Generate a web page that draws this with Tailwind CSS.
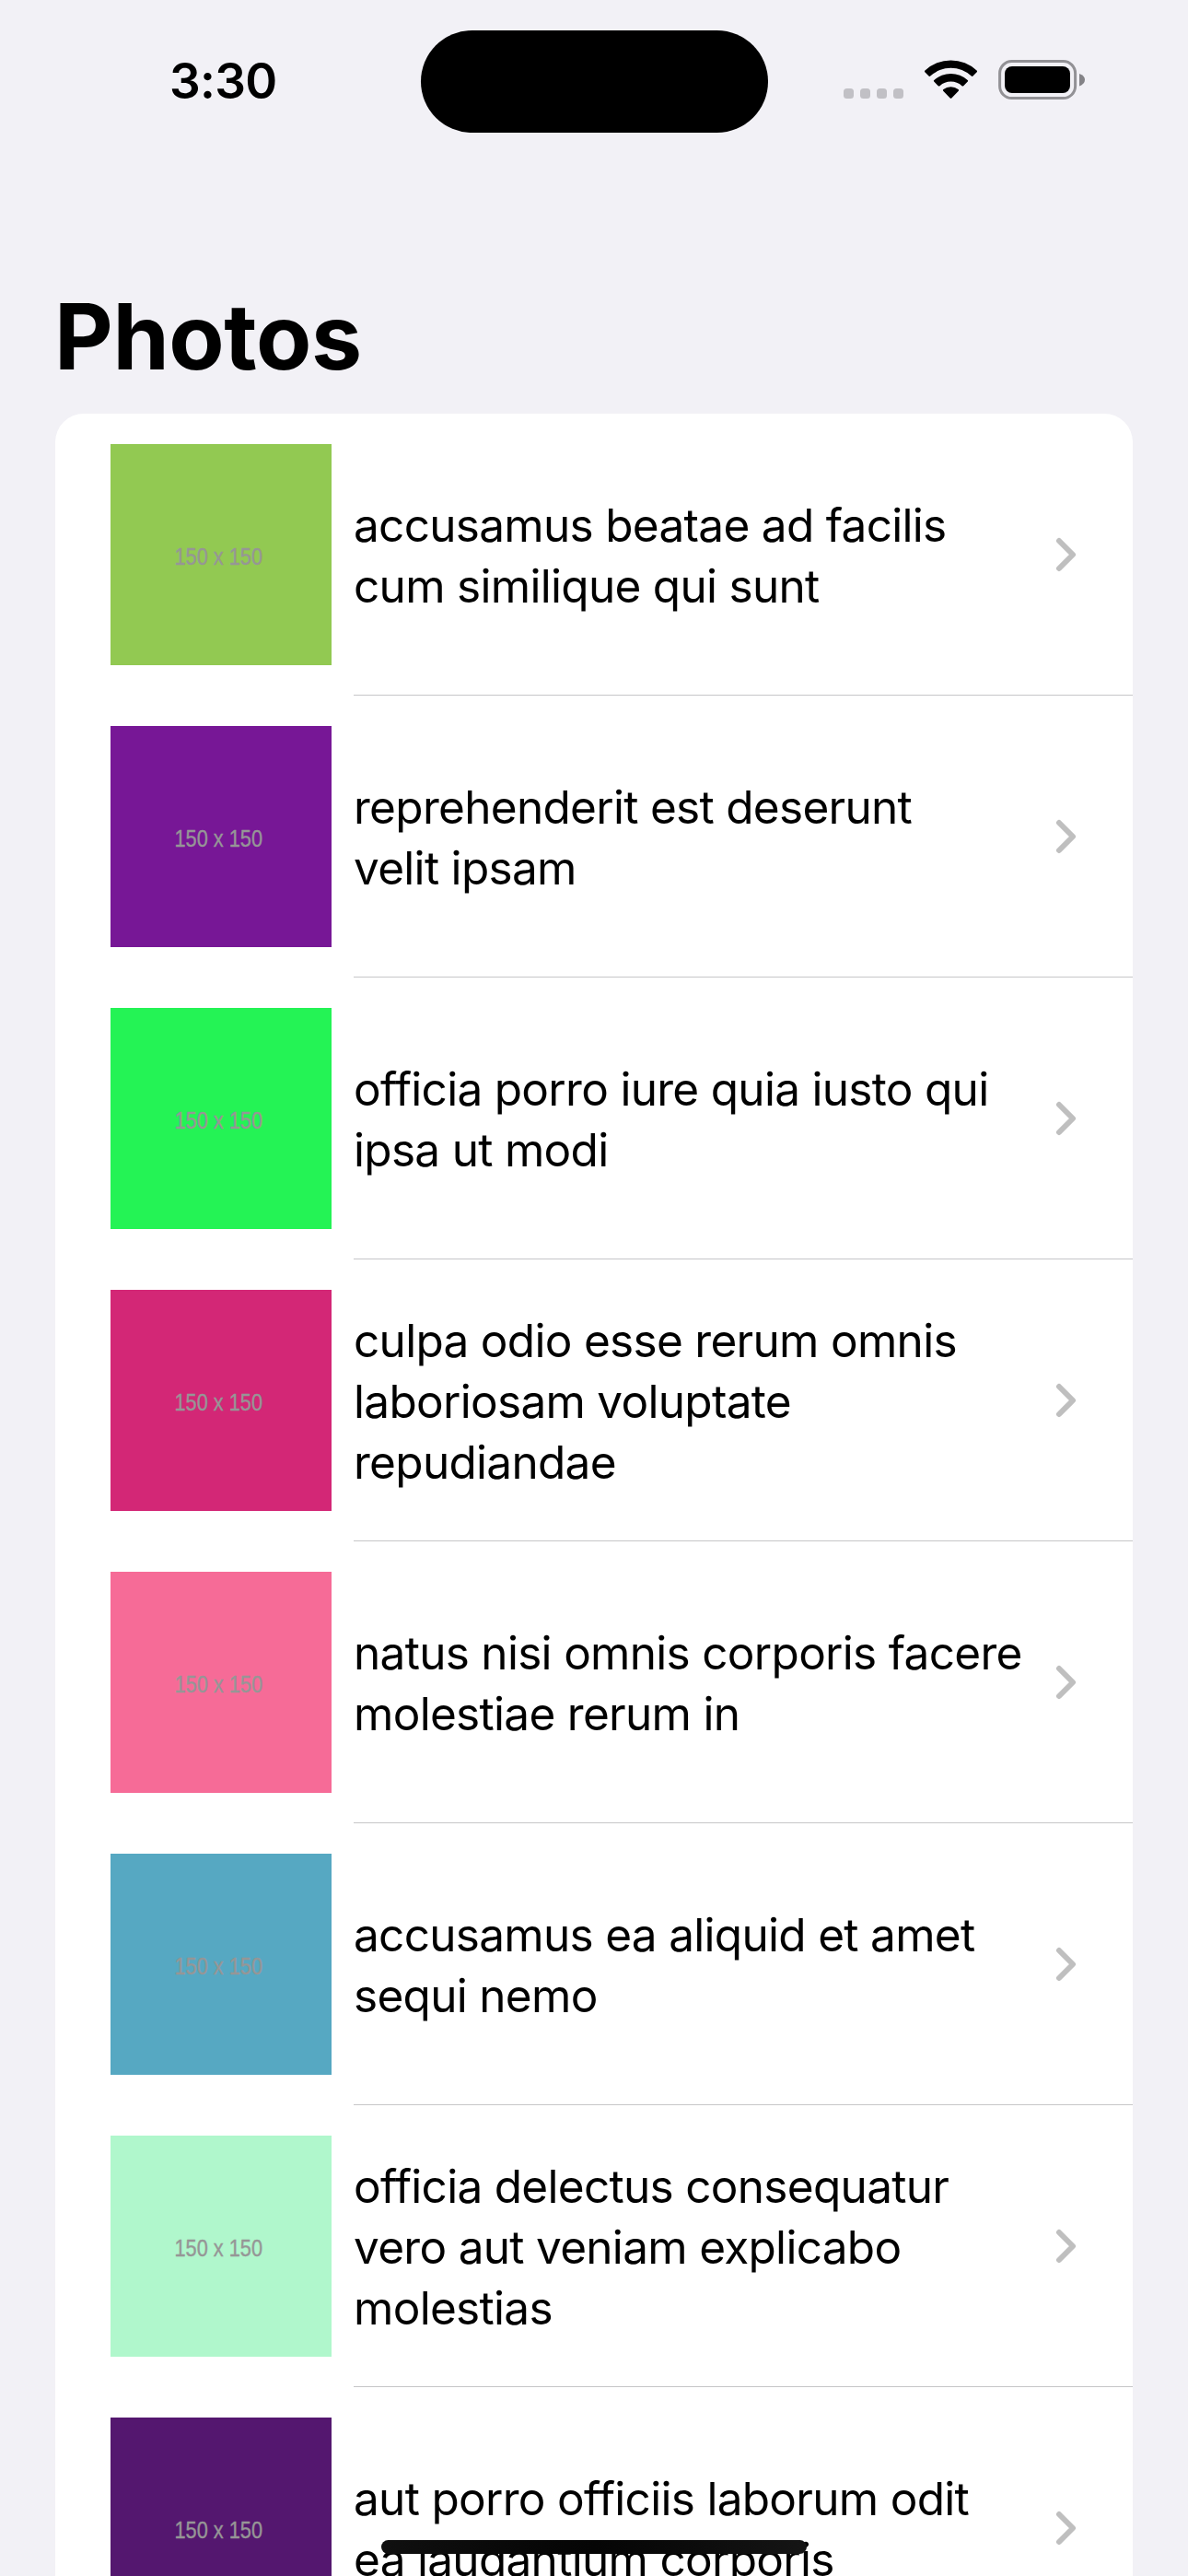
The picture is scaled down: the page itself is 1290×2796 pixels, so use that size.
<!DOCTYPE html>
<html lang="en">
<head>
<meta charset="utf-8">
<title>Photos</title>
<script src="https://cdn.jsdelivr.net/npm/@tailwindcss/browser@4"></script>
</head>
<body class="bg-[#f2f1f6]">
<div class="relative flex h-[2796px] w-[1290px] flex-col overflow-hidden bg-[#f2f1f6] font-['Inter',sans-serif] text-black">
  <header class="flex h-[177px] shrink-0 items-start justify-between">
    <div class="w-[456.5px] pt-[56px] pl-[184px] text-[53px] leading-[64px] font-semibold tracking-[-0.7px]">3:30</div>
    <div class="mt-[33.3px] h-[111px] w-[377px] rounded-full bg-black"></div>
    <svg class="mt-[60px] mr-[108px] ml-[82.5px] shrink-0" width="266" height="52" viewBox="0 0 266 52">
      <g fill="#c1c0c5"><rect y="36" width="11" height="11" rx="3.5"/><rect x="18" y="36" width="11" height="11" rx="3.5"/><rect x="36" y="36" width="11" height="11" rx="3.5"/><rect x="54" y="36" width="11" height="11" rx="3.5"/></g>
      <g>
        <path d="M88.3 18.2 Q87.5 17.4 88.4 16.6 A41 41 0 0 1 144.6 16.6 Q145.5 17.4 144.7 18.2 L140.5 22.6 Q139.7 23.4 138.8 22.6 A32.5 32.5 0 0 0 94.2 22.6 Q93.3 23.4 92.5 22.6 Z"/>
        <path d="M98.2 28.6 Q97.4 27.8 98.3 27 A27 27 0 0 1 134.7 27 Q135.6 27.8 134.8 28.6 L130.2 33.2 Q129.4 34 128.5 33.2 A18 18 0 0 0 104.5 33.2 Q103.6 34 102.8 33.2 Z"/>
        <path d="M108.2 38.7 Q107.4 37.9 108.4 37.1 A13 13 0 0 1 124.6 37.1 Q125.6 37.9 124.8 38.7 L117.3 46.4 Q116.5 47.2 115.7 46.4 Z"/>
      </g>
      <rect x="169.6" y="6.6" width="82" height="40" rx="13" fill="none" stroke="#929195" stroke-width="3"/>
      <rect x="175" y="12" width="71" height="29" rx="8"/>
      <path d="M256 20 Q262 22 262 26.5 Q262 31 256 33.5 Z" fill="#848387"/>
    </svg>
  </header>
  <h1 class="h-[272px] shrink-0 pt-[125px] pl-[59px] text-[98.5px] leading-[128px] font-bold tracking-[-0.4px]">Photos</h1>
  <ul id="photos" class="mx-[60px] flex flex-col rounded-t-[31px] bg-white"></ul>
  <div class="absolute top-[2757px] left-[414px] h-[15px] w-[462px] rounded-full bg-linear-to-r from-[#101010] via-[#050505] to-[#151515]"></div>
</div>
<template id="row">
  <li class="flex h-[306px] shrink-0 items-stretch pl-[60px]">
    <svg class="my-[33px] shrink-0" width="240" height="240" viewBox="0 0 240 240">
      <rect width="240" height="240"/>
      <text x="69.5" y="131" textLength="95.5" lengthAdjust="spacingAndGlyphs" class="fill-[#969696] stroke-[#969696] stroke-[0.4px] font-['Liberation_Sans',sans-serif] text-[25.5px]">150 x 150</text>
    </svg>
    <div class="ml-[24px] flex flex-1 items-center justify-between border-b border-[#c6c6c8] pr-[61px]">
      <p class="pt-0.5 text-[49.5px] leading-[66px] tracking-[-0.7px] whitespace-pre"></p>
      <svg class="shrink-0" width="23" height="38" viewBox="0 0 23 38" fill="none" stroke="#bfbfbf" stroke-width="6" stroke-linecap="round" stroke-linejoin="round"><path d="M4 4 L19 19 L4 34"/></svg>
    </div>
  </li>
</template>
<script>
const photos = [
  ['#92c952', 'accusamus beatae ad facilis\ncum similique qui sunt'],
  ['#771796', 'reprehenderit est deserunt\nvelit ipsam'],
  ['#24f355', 'officia porro iure quia iusto qui\nipsa ut modi'],
  ['#d32776', 'culpa odio esse rerum omnis\nlaboriosam voluptate\nrepudiandae'],
  ['#f66b97', 'natus nisi omnis corporis facere\nmolestiae rerum in'],
  ['#56a8c2', 'accusamus ea aliquid et amet\nsequi nemo'],
  ['#b0f7cc', 'officia delectus consequatur\nvero aut veniam explicabo\nmolestias'],
  ['#54176f', 'aut porro officiis laborum odit\nea laudantium corporis'],
];
const list = document.getElementById('photos');
const row = document.getElementById('row');
for (const [color, title] of photos) {
  const item = row.content.cloneNode(true);
  item.querySelector('rect').setAttribute('fill', color);
  item.querySelector('p').textContent = title;
  list.append(item);
}
</script>
</body>
</html>
